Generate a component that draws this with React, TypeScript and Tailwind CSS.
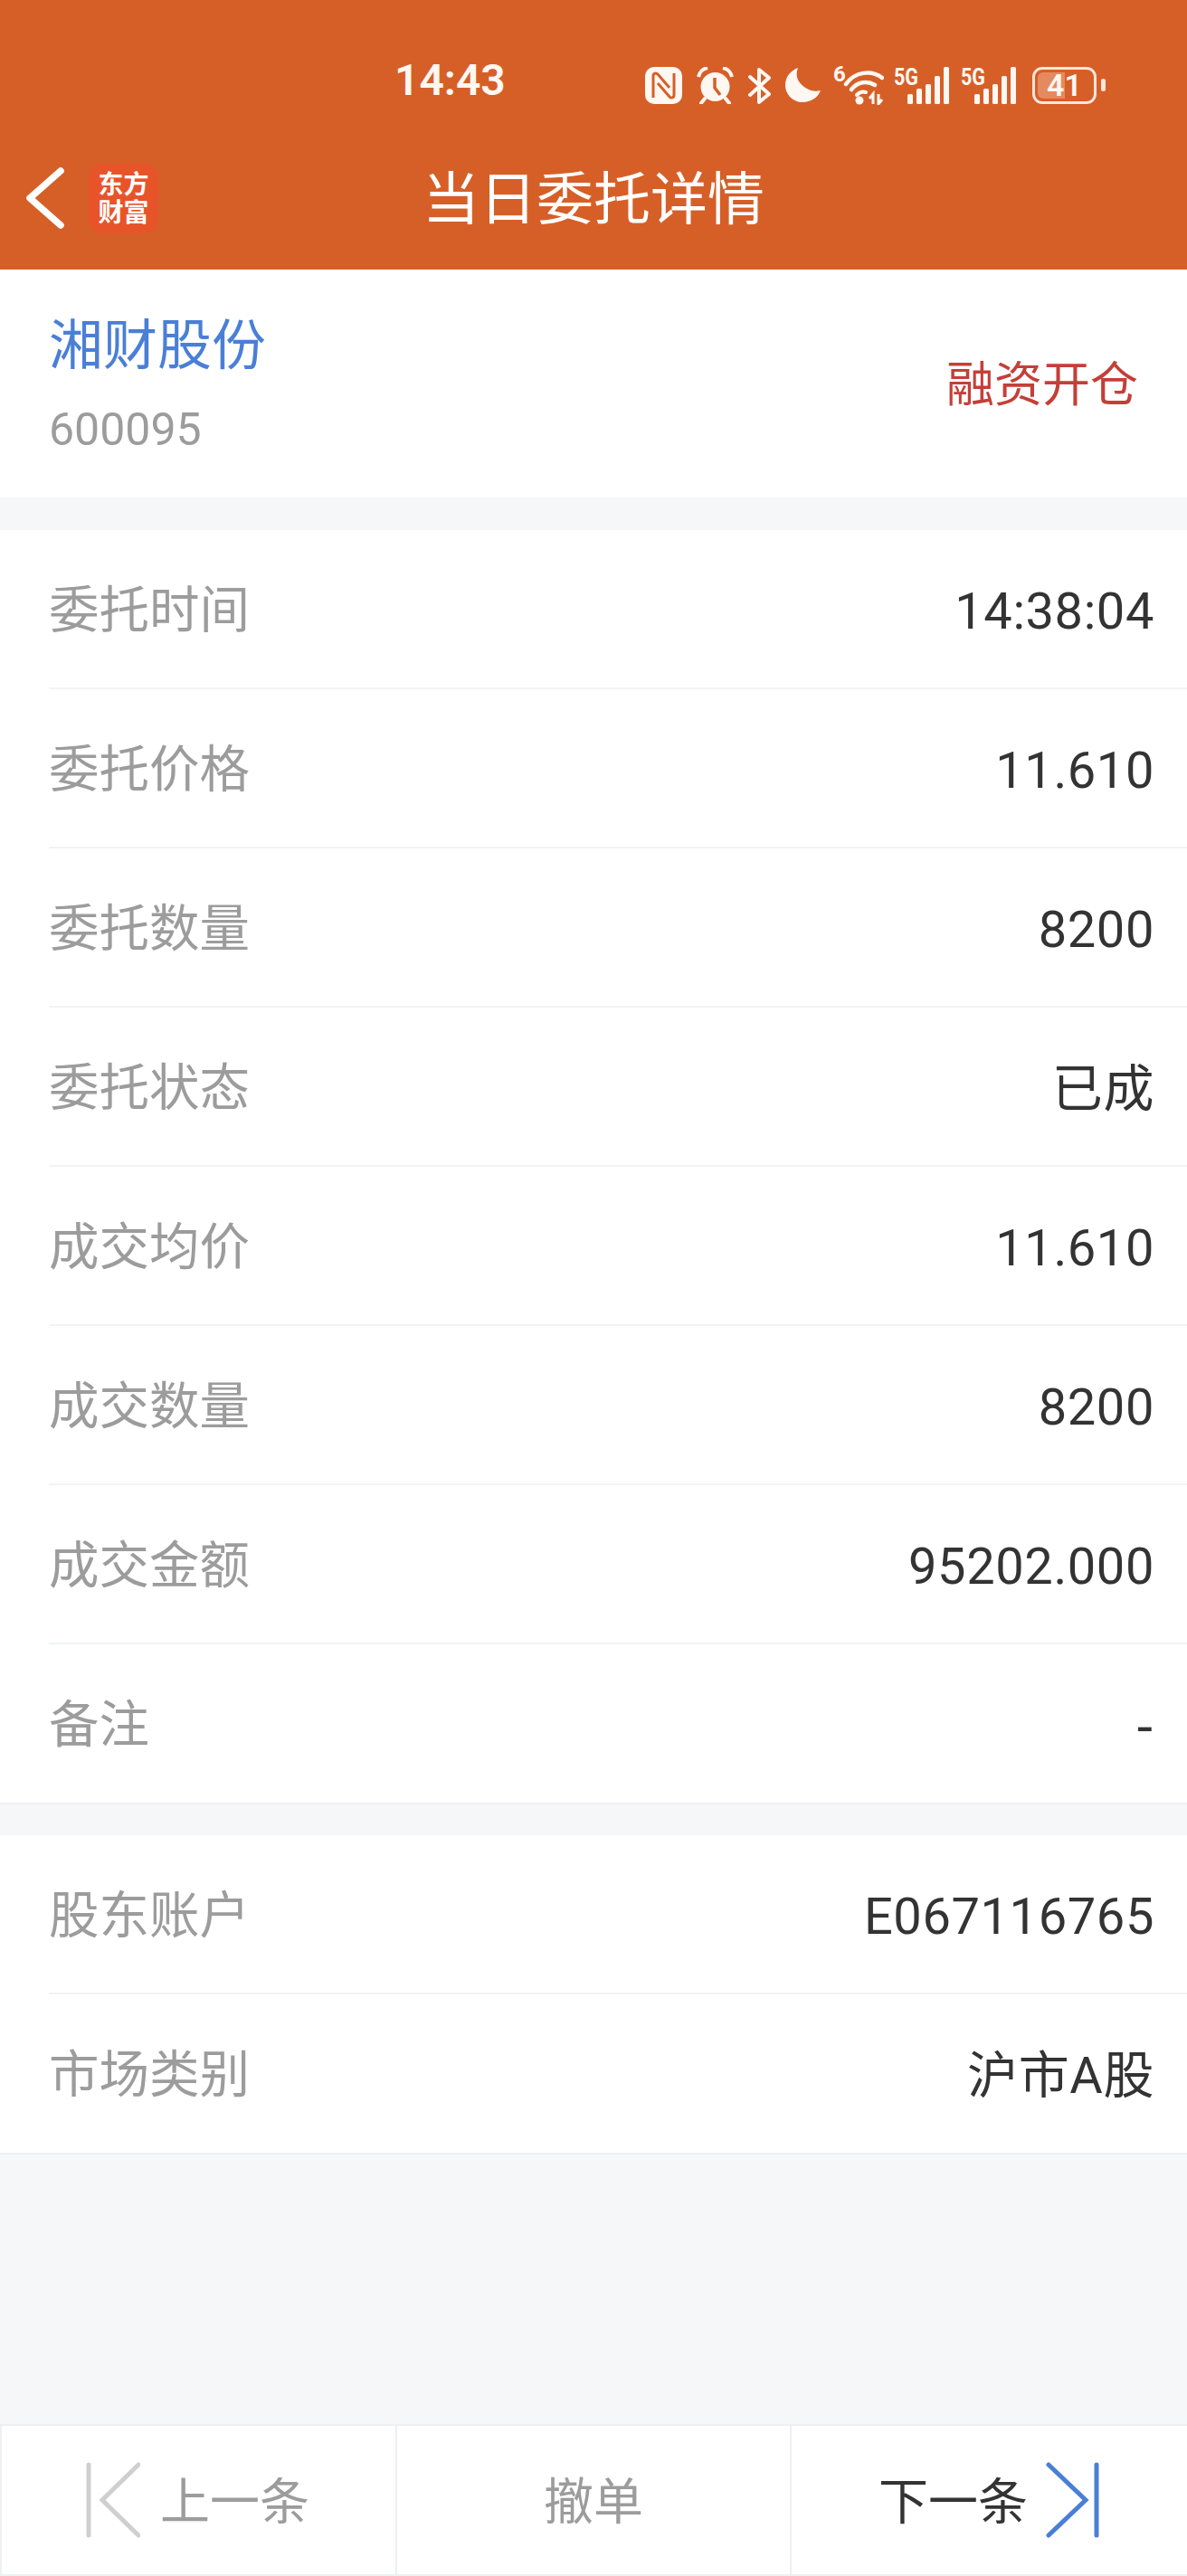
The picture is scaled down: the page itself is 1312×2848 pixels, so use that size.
const orderRows = [
  ["委托时间", "14:38:04"],
  ["委托价格", "11.610"],
  ["委托数量", "8200"],
  ["委托状态", "已成"],
  ["成交均价", "11.610"],
  ["成交数量", "8200"],
  ["成交金额", "95202.000"],
  ["备注", "-"],
];

const accountRows = [
  ["股东账户", "E067116765"],
  ["市场类别", "沪市A股"],
];

const ICON = "#fff7f2";
const BAR = "#d65f28";

function SignalIcon() {
  return (
    <svg width="62" height="46" viewBox="0 -5 62 46" fill={ICON} className="-mt-[5px] block">
      <text x="0" y="20" fontSize="25" fontWeight="700" fontFamily="Roboto, sans-serif" textLength="27" lengthAdjust="spacingAndGlyphs">
        5G
      </text>
      <rect x="15" y="30" width="6" height="11" rx="1.5" />
      <rect x="25" y="24" width="6" height="17" rx="1.5" />
      <rect x="35" y="19" width="6" height="22" rx="1.5" />
      <rect x="45" y="10" width="6" height="31" rx="1.5" />
      <rect x="55" y="0" width="6" height="41" rx="1.5" />
    </svg>
  );
}

function StatusIcons() {
  return (
    <div className="flex items-center">
      {/* nfc */}
      <svg width="41" height="41" viewBox="0 0 41 41" fill="none">
        <rect width="41" height="41" rx="10" fill={ICON} />
        <path d="M9 34V10c0-3 3-4 5-2l13 15" stroke={BAR} strokeWidth="3" />
        <path d="M32 7v24c0 3-3 4-5 2L14 18" stroke={BAR} strokeWidth="3" />
      </svg>
      {/* alarm */}
      <svg width="41" height="41" viewBox="0 0 41 41" fill="none" className="ml-[16px]">
        <circle cx="20.5" cy="22" r="16" fill={ICON} />
        <path d="M20 12v11l6 8" stroke={BAR} strokeWidth="3.5" />
        <path d="M2 11C3 6 7 2 12 1M39 11c-1-5-5-9-10-10" stroke={ICON} strokeWidth="4" />
        <path d="M9 35l-4 5M32 35l4 5" stroke={ICON} strokeWidth="4" strokeLinecap="round" />
      </svg>
      {/* bluetooth */}
      <svg width="27" height="41" viewBox="0 0 27 41" fill="none" className="ml-[15px]">
        <path d="M3 11l21 19-11 9V3l11 9L3 31" stroke={ICON} strokeWidth="4" strokeLinejoin="round" strokeLinecap="round" />
      </svg>
      {/* do not disturb */}
      <svg width="40" height="40" viewBox="0 0 40 40" className="ml-[15px]">
        <path d="M14 1C6 4 0 11 0 20c0 11 9 19 19 19 9 0 17-5 20-13-4 1-9 1-13-1C15 20 10 11 14 1z" fill={ICON} />
      </svg>
      {/* wifi */}
      <svg width="56" height="49" viewBox="0 -5 56 49" fill="none" className="ml-[13px] -mt-[5px]">
        <text x="0" y="18" fontSize="24" fontWeight="700" fill={ICON} fontFamily="Roboto, sans-serif">
          6
        </text>
        <path d="M14 21C24 7 42 5 54 14" stroke={ICON} strokeWidth="4.5" strokeLinecap="round" />
        <path d="M20 27c7-9 18-10 26-5" stroke={ICON} strokeWidth="4.5" strokeLinecap="round" />
        <path d="M26 33c3-3 7-4 10-3" stroke={ICON} strokeWidth="4" strokeLinecap="round" />
        <circle cx="29" cy="39" r="4.5" fill={ICON} />
        <path d="M44 43V32l-4 5M50 32v11l4-5" stroke={ICON} strokeWidth="3" />
      </svg>
      <div className="ml-[11px]">
        <SignalIcon />
      </div>
      <div className="ml-[12px]">
        <SignalIcon />
      </div>
      {/* battery */}
      <div className="ml-[17px] flex items-center">
        <div className="relative h-[41px] w-[71px] overflow-hidden rounded-[11px] border-[3px] border-[#fbe6da]">
          <div className="absolute inset-y-[3px] left-[3px] w-[30px] rounded-l-[6px] bg-[#e58a5e]" />
          <span className="relative flex h-full items-center justify-center text-[34px] font-semibold leading-none text-[#fff7f2]">
            41
          </span>
        </div>
        <div className="ml-[5px] h-[14px] w-[5px] rounded-full bg-[#fbe6da]" />
      </div>
    </div>
  );
}

function DetailRow({ label, value, last }: { label: string; value: string; last?: boolean }) {
  return (
    <div className="pl-[54px]">
      <div
        className={`flex items-center justify-between pt-[5px] pr-[36px] ${
          last ? "h-[175px]" : "h-[176px] border-b-2 border-[#f2f3f5]"
        }`}
      >
        <span className="text-[55.5px] text-[#9c9c9c]">{label}</span>
        <span className={`text-[56px] tracking-[0.6px] text-[#333] ${value === "-" ? "font-['DejaVu_Sans']" : ""}`}>{value}</span>
      </div>
    </div>
  );
}

export default function App() {
  return (
    <div className="flex min-h-[2848px] w-[1312px] flex-col bg-[#f6f7f9] font-['Roboto','Noto_Sans_CJK_SC',sans-serif]">
      <header className="h-[298px] bg-[#d65f28] text-white">
        <div className="flex h-[120px] pt-[68px]">
          <span className="ml-[436px] flex h-[41px] w-[277px] items-center text-[48px] leading-none font-semibold text-[#fff7f2]">14:43</span>
          <StatusIcons />
        </div>
        <div className="relative flex h-[178px] items-center justify-center pt-[22px]">
          <svg width="44" height="70" viewBox="0 0 44 70" fill="none" className="absolute left-[28px] top-[64px]">
            <path d="M39 5L5 35l34 30" stroke="#fff" strokeWidth="7.5" strokeLinecap="round" strokeLinejoin="round" />
          </svg>
          <div className="absolute left-[98px] top-[61px] flex h-[77px] w-[77px] flex-col items-center justify-center rounded-[14px] bg-[#e8542a] text-[28px] leading-[31px] font-bold">
            <span>东方</span>
            <span>财富</span>
          </div>
          <h1 className="text-[63px] leading-none font-normal">当日委托详情</h1>
        </div>
      </header>

      <section className="flex h-[252px] items-center justify-between bg-white pl-[54px] pr-[54px]">
        <div>
          <div className="text-[60px] leading-[80px] text-[#4a7fd6]">湘财股份</div>
          <div className="mt-[22px] text-[50px] leading-[60px] text-[#9c9c9c]">600095</div>
        </div>
        <span className="pt-[6px] text-[53px] text-[#c43f38]">融资开仓</span>
      </section>

      <section className="mt-[36px] border-b-2 border-[#eff0f2] bg-white">
        {orderRows.map(([label, value], i) => (
          <DetailRow key={label} label={label} value={value} last={i === orderRows.length - 1} />
        ))}
      </section>

      <section className="mt-[34px] border-b-2 border-[#eff0f2] bg-white">
        {accountRows.map(([label, value], i) => (
          <DetailRow key={label} label={label} value={value} last={i === accountRows.length - 1} />
        ))}
      </section>

      <footer className="mt-auto grid h-[168px] grid-cols-[439px_436px_437px] border-y-2 border-[#eeeff1] bg-white text-[55px]">
        <button className="flex items-center border-x-2 border-[#eeeff1] pl-[93px] text-[#9c9c9c]">
          <svg width="60" height="84" viewBox="0 0 60 84" fill="none" stroke="#cfcfcf" strokeWidth="5" strokeLinecap="round">
            <path d="M3 3v78M58 3L18 42l40 39" />
          </svg>
          <span className="mt-[5px] ml-[22px]">上一条</span>
        </button>
        <button className="flex items-center justify-center border-r-2 border-[#eeeff1] text-[#9c9c9c]">
          <span className="mt-[5px]">撤单</span>
        </button>
        <button className="flex items-center pl-[96px] text-[#333]">
          <span className="mt-[5px]">下一条</span>
          <svg width="60" height="84" viewBox="0 0 60 84" fill="none" stroke="#4a7fd6" strokeWidth="5" strokeLinecap="round" className="ml-[20px]">
            <path d="M3 3l41 39L3 81M56 3v78" />
          </svg>
        </button>
      </footer>
    </div>
  );
}
